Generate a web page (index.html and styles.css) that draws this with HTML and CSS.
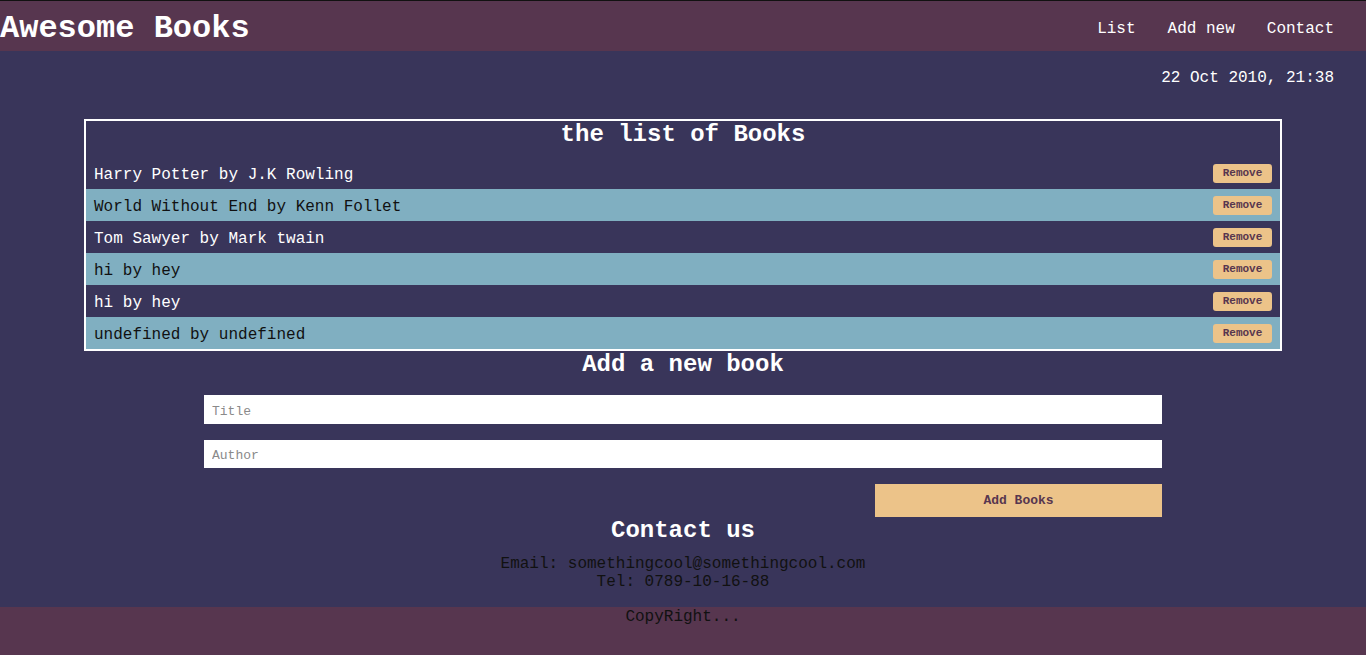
FILE: index.html
```html
<!DOCTYPE html>
<html lang="en">
<head>
<meta charset="utf-8">
<title>Awesome Books</title>
<link rel="stylesheet" href="styles.css">
</head>
<body>
<header class="topbar">
  <h1 class="brand">Awesome Books</h1>
  <nav class="nav">
    <a class="nav-link" href="#list">List</a>
    <a class="nav-link" href="#add">Add new</a>
    <a class="nav-link" href="#contact">Contact</a>
  </nav>
</header>
<main class="main">
  <p class="date">22 Oct 2010, 21:38</p>
  <section class="books" id="list">
    <h2 class="books-title">the list of Books</h2>
    <ul class="book-list">
      <li class="book dark"><span class="book-text">Harry Potter by J.K Rowling</span><button class="remove">Remove</button></li>
      <li class="book light"><span class="book-text">World Without End by Kenn Follet</span><button class="remove">Remove</button></li>
      <li class="book dark"><span class="book-text">Tom Sawyer by Mark twain</span><button class="remove">Remove</button></li>
      <li class="book light"><span class="book-text">hi by hey</span><button class="remove">Remove</button></li>
      <li class="book dark"><span class="book-text">hi by hey</span><button class="remove">Remove</button></li>
      <li class="book light"><span class="book-text">undefined by undefined</span><button class="remove">Remove</button></li>
    </ul>
  </section>
  <section class="add" id="add">
    <h2 class="section-title">Add a new book</h2>
    <form class="form">
      <input class="field" type="text" placeholder="Title">
      <input class="field" type="text" placeholder="Author">
      <button class="add-btn" type="button">Add Books</button>
    </form>
  </section>
  <section class="contact" id="contact">
    <h2 class="section-title">Contact us</h2>
    <p class="contact-line">Email: somethingcool@somethingcool.com</p>
    <p class="contact-line">Tel: 0789-10-16-88</p>
  </section>
</main>
<footer class="footer">CopyRight...</footer>
</body>
</html>
```
FILE: styles.css
```css
html, body {
  margin: 0;
  padding: 0;
}
body {
  font-family: "Liberation Mono", "Courier New", monospace;
  background: #39355a;
  color: #fff;
  border-top: 1px solid #111;
  min-height: 654px;
  display: flex;
  flex-direction: column;
}
.topbar {
  height: 50px;
  box-sizing: border-box;
  padding: 5px 32px 0 0;
  background: #57364f;
  display: flex;
  align-items: center;
  justify-content: space-between;
}
.brand {
  margin: 0;
  font-size: 32px;
  font-weight: bold;
  line-height: 1;
}
.nav {
  display: flex;
  gap: 32px;
  font-size: 16px;
}
.nav-link {
  color: #fff;
  text-decoration: none;
}
.main {
  flex: 1;
  display: flex;
  flex-direction: column;
}
.date {
  margin: 18px 32px 0 0;
  text-align: right;
  font-size: 16px;
  line-height: 18px;
}
.books {
  margin: 32px 84px 0;
  border: 2px solid #fff;
}
.books-title {
  margin: 0;
  height: 36px;
  box-sizing: border-box;
  padding-top: 1px;
  font-size: 24px;
  line-height: 26px;
  text-align: center;
}
.book-list {
  list-style: none;
  margin: 0;
  padding: 0;
}
.book {
  height: 32px;
  display: flex;
  align-items: center;
  justify-content: space-between;
  padding: 0 8px;
  font-size: 16px;
}
.book-text {
  padding-top: 4px;
}
.book.dark {
  background: #39355a;
  color: #fff;
}
.book.light {
  background: #80afc1;
  color: #111;
}
.remove {
  font-family: "Liberation Mono", "Courier New", monospace;
  font-weight: bold;
  font-size: 11px;
  color: #57364f;
  background: #ecc389;
  border: none;
  border-radius: 3px;
  height: 19px;
  width: 59px;
  padding: 0;
}
.section-title {
  margin: 0;
  font-size: 24px;
  line-height: 27px;
  text-align: center;
}
.add .section-title {
  padding-top: 1px;
  line-height: 26px;
}
.form {
  width: 958px;
  margin: 17px auto 0;
  display: flex;
  flex-direction: column;
  gap: 16px;
}
.field {
  height: 28px;
  border: none;
  padding: 3px 8px 0;
  font-family: "Liberation Mono", "Courier New", monospace;
  font-size: 13px;
  box-sizing: border-box;
}
.field:first-child {
  height: 29px;
}
.field::placeholder {
  color: #8a8a8a;
}
.add-btn {
  align-self: flex-end;
  width: 287px;
  height: 33px;
  border: none;
  background: #ecc389;
  color: #57364f;
  font-family: "Liberation Mono", "Courier New", monospace;
  font-weight: bold;
  font-size: 13px;
}
.contact {
  padding-bottom: 16px;
}
.contact .section-title {
  margin-bottom: 11px;
}
.contact-line {
  margin: 0;
  text-align: center;
  font-size: 16px;
  line-height: 18px;
  color: #111;
}
.footer {
  background: #57364f;
  color: #111;
  text-align: center;
  font-size: 16px;
  line-height: 18px;
  padding-top: 1px;
  height: 47px;
}
```
